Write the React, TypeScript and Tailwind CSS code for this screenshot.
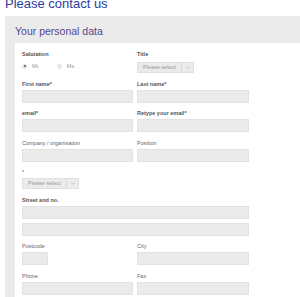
import {ReactNode} from 'react'

const font = {fontFamily: '"Liberation Sans", Arial, sans-serif'}

const Label = ({children, bold}: {children: ReactNode; bold?: boolean}) => (
    <div className={bold ? 'h-[8px] text-[5.5px] leading-[8px] font-bold text-[#555]' : 'h-[8px] text-[5.5px] leading-[8px] text-[#666]'}>
        {children}
    </div>
)

const Field = ({className = 'w-full'}: {className?: string}) => (
    <input
        type="text"
        className={`block h-[13px] border border-[#e2e2e2] bg-[#ebebeb] outline-none ${className}`}
    />
)

const Select = () => (
    <div className="flex h-[11px] w-[57px] items-center border border-[#e0e0e0] bg-[#ebebeb]">
        <span className="flex-1 pl-[5px] text-[5.5px] leading-[9px] text-[#999]">Please select</span>
        <span className="flex h-full w-[12px] items-center justify-center border-l border-[#dadada]">
            <svg width="4" height="3" viewBox="0 0 4 3">
                <path d="M0.3 0.6 L2 2.3 L3.7 0.6" fill="none" stroke="#aaa" strokeWidth="0.6" />
            </svg>
        </span>
    </div>
)

const Radio = ({checked, label}: {checked?: boolean; label: string}) => (
    <label className="flex items-center gap-[5px]">
        <span className="flex h-[5px] w-[5px] items-center justify-center rounded-full border border-[#ddd] bg-[#eee]">
            {checked && <span className="h-[2px] w-[2px] rounded-full bg-[#555]" />}
        </span>
        <span className="text-[5.5px] text-[#999]">{label}</span>
    </label>
)

const TextRow = ({left, right, leftBold, rightBold}: {left: string; right: string; leftBold?: boolean; rightBold?: boolean}) => (
    <div className="grid grid-cols-[111px_112px] gap-x-[4px]">
        <div>
            <Label bold={leftBold}>{left}</Label>
            <div className="mt-[2px]"><Field /></div>
        </div>
        <div>
            <Label bold={rightBold}>{right}</Label>
            <div className="mt-[2px]"><Field /></div>
        </div>
    </div>
)

export default function App() {
    return (
        <div className="h-[297px] w-[300px] overflow-hidden bg-white pl-[5px]" style={font}>
            <h1 className="mt-[-3px] text-[13px] leading-[13px] text-[#2b3d9b]">Please contact us</h1>

            <div className="mt-[6px] w-[330px] bg-[#ebebeb]">
                <h2 className="h-[27px] pl-[10px] pt-[3px] text-[10.5px] leading-[24px] text-[#55468f]">
                    Your personal data
                </h2>

                <div className="ml-[10px] bg-white pb-[20px] pl-[7px] pt-[7px]">
                    <div className="flex w-[227px] flex-col gap-[6.5px]">
                        <div className="grid grid-cols-[111px_112px] gap-x-[4px]">
                            <div>
                                <Label bold>Salutation</Label>
                                <div className="mt-[4px] flex h-[11px] items-center gap-[17px] pb-[3px]">
                                    <Radio checked label="Mr." />
                                    <Radio label="Ms." />
                                </div>
                            </div>
                            <div>
                                <Label bold>Title</Label>
                                <div className="mt-[4px]"><Select /></div>
                            </div>
                        </div>

                        <TextRow left="First name*" right="Last name*" leftBold rightBold />
                        <TextRow left="email*" right="Retype your email*" leftBold rightBold />
                        <TextRow left="Company / organisation" right="Position" />

                        <div>
                            <Label>*</Label>
                            <div className="mt-[2px]"><Select /></div>
                        </div>

                        <div>
                            <Label bold>Street and no.</Label>
                            <div className="mt-[2px] flex flex-col gap-[4px]">
                                <Field />
                                <Field />
                            </div>
                        </div>

                        <div className="grid grid-cols-[111px_112px] gap-x-[4px]">
                            <div>
                                <Label>Postcode</Label>
                                <div className="mt-[2px]"><Field className="w-[26px]" /></div>
                            </div>
                            <div>
                                <Label>City</Label>
                                <div className="mt-[2px]"><Field /></div>
                            </div>
                        </div>

                        <TextRow left="Phone" right="Fax" />
                    </div>
                </div>
            </div>
        </div>
    )
}
